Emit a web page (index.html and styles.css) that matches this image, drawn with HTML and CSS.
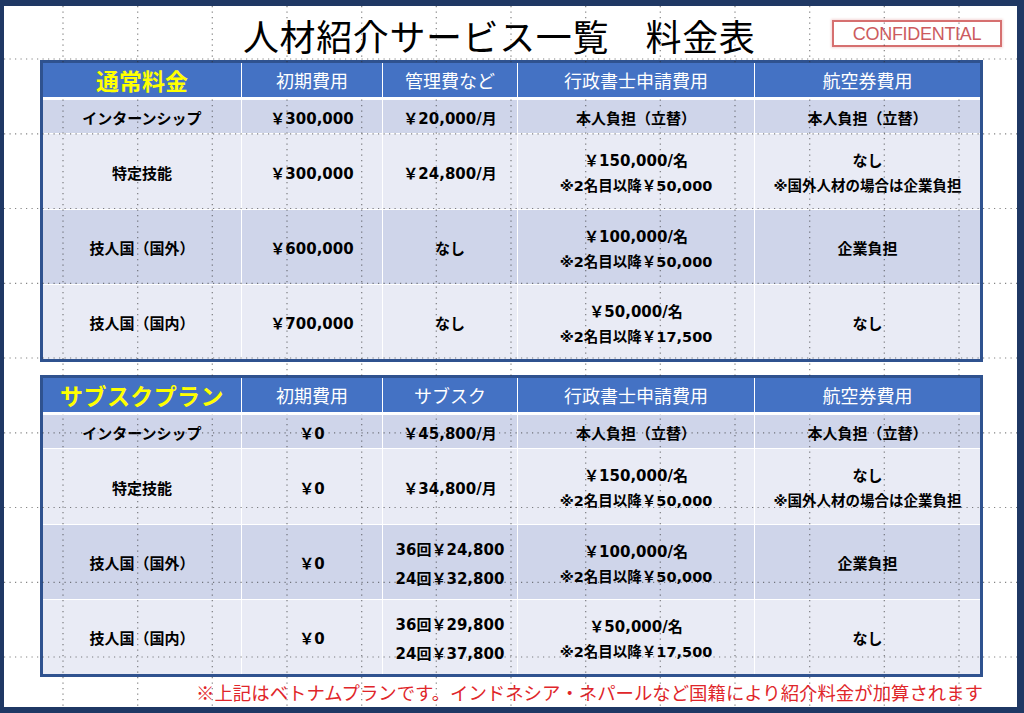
FILE: index.html
```html
<!DOCTYPE html>
<html lang="ja">
<head>
<meta charset="utf-8">
<title>人材紹介サービス一覧 料金表</title>
<link rel="stylesheet" href="styles.css">
</head>
<body>
<div class="page">
  <div class="title-row">
    <h1 class="title">人材紹介サービス一覧　料金表</h1>
    <div class="confidential">CONFIDENTIAL</div>
  </div>

  <div class="tbl">
    <div class="hd hd-main">通常料金</div>
    <div class="hd">初期費用</div>
    <div class="hd">管理費など</div>
    <div class="hd">行政書士申請費用</div>
    <div class="hd">航空券費用</div>

    <div class="c dk">インターンシップ</div>
    <div class="c dk">￥300,000</div>
    <div class="c dk">￥20,000/月</div>
    <div class="c dk">本人負担（立替）</div>
    <div class="c dk">本人負担（立替）</div>

    <div class="c lt">特定技能</div>
    <div class="c lt">￥300,000</div>
    <div class="c lt">￥24,800/月</div>
    <div class="c lt two"><span>￥150,000/名</span><span class="note">※2名目以降￥50,000</span></div>
    <div class="c lt two"><span>なし</span><span class="note">※国外人材の場合は企業負担</span></div>

    <div class="c dk">技人国（国外）</div>
    <div class="c dk">￥600,000</div>
    <div class="c dk">なし</div>
    <div class="c dk two"><span>￥100,000/名</span><span class="note">※2名目以降￥50,000</span></div>
    <div class="c dk">企業負担</div>

    <div class="c lt">技人国（国内）</div>
    <div class="c lt">￥700,000</div>
    <div class="c lt">なし</div>
    <div class="c lt two"><span>￥50,000/名</span><span class="note">※2名目以降￥17,500</span></div>
    <div class="c lt">なし</div>
  </div>

  <div class="tbl tbl-sub">
    <div class="hd hd-main hd-spaced">サブスクプラン</div>
    <div class="hd">初期費用</div>
    <div class="hd">サブスク</div>
    <div class="hd">行政書士申請費用</div>
    <div class="hd">航空券費用</div>

    <div class="c dk">インターンシップ</div>
    <div class="c dk">￥0</div>
    <div class="c dk">￥45,800/月</div>
    <div class="c dk">本人負担（立替）</div>
    <div class="c dk">本人負担（立替）</div>

    <div class="c lt">特定技能</div>
    <div class="c lt">￥0</div>
    <div class="c lt">￥34,800/月</div>
    <div class="c lt two"><span>￥150,000/名</span><span class="note">※2名目以降￥50,000</span></div>
    <div class="c lt two"><span>なし</span><span class="note">※国外人材の場合は企業負担</span></div>

    <div class="c dk">技人国（国外）</div>
    <div class="c dk">￥0</div>
    <div class="c dk two wide"><span>36回￥24,800</span><span>24回￥32,800</span></div>
    <div class="c dk two"><span>￥100,000/名</span><span class="note">※2名目以降￥50,000</span></div>
    <div class="c dk">企業負担</div>

    <div class="c lt">技人国（国内）</div>
    <div class="c lt">￥0</div>
    <div class="c lt two wide"><span>36回￥29,800</span><span>24回￥37,800</span></div>
    <div class="c lt two"><span>￥50,000/名</span><span class="note">※2名目以降￥17,500</span></div>
    <div class="c lt">なし</div>
  </div>

  <p class="footnote">※上記はベトナムプランです。インドネシア・ネパールなど国籍により紹介料金が加算されます</p>

  <svg class="grid" width="1013" height="701" viewBox="0 0 1013 701" aria-hidden="true">
    <g class="gl">
      <line x1="59" y1="0" x2="59" y2="701"/>
      <line x1="133.7" y1="0" x2="133.7" y2="701"/>
      <line x1="208.3" y1="0" x2="208.3" y2="701"/>
      <line x1="283" y1="0" x2="283" y2="701"/>
      <line x1="357.7" y1="0" x2="357.7" y2="701"/>
      <line x1="432.3" y1="0" x2="432.3" y2="701"/>
      <line x1="507" y1="0" x2="507" y2="701"/>
      <line x1="581.7" y1="0" x2="581.7" y2="701"/>
      <line x1="656.3" y1="0" x2="656.3" y2="701"/>
      <line x1="731" y1="0" x2="731" y2="701"/>
      <line x1="805.7" y1="0" x2="805.7" y2="701"/>
      <line x1="880.3" y1="0" x2="880.3" y2="701"/>
      <line x1="955" y1="0" x2="955" y2="701"/>
      <line x1="0" y1="53" x2="1013" y2="53"/>
      <line x1="0" y1="127.8" x2="1013" y2="127.8"/>
      <line x1="0" y1="202.5" x2="1013" y2="202.5"/>
      <line x1="0" y1="277.3" x2="1013" y2="277.3"/>
      <line x1="0" y1="352" x2="1013" y2="352"/>
      <line x1="0" y1="426.8" x2="1013" y2="426.8"/>
      <line x1="0" y1="501.5" x2="1013" y2="501.5"/>
      <line x1="0" y1="576.3" x2="1013" y2="576.3"/>
      <line x1="0" y1="651" x2="1013" y2="651"/>
    </g>
  </svg>
</div>
</body>
</html>
```
FILE: styles.css
```css
html, body {
  margin: 0;
  padding: 0;
}
body {
  background: #1f3864;
  width: 1024px;
  height: 713px;
  overflow: hidden;
  font-family: "Noto Sans CJK JP", sans-serif;
}
.page {
  position: relative;
  margin: 6px 0 0 4px;
  width: 1013px;
  height: 701px;
  background: #ffffff;
  overflow: hidden;
  display: flex;
  flex-direction: column;
}
.title-row {
  height: 54px;
  display: flex;
  align-items: center;
  flex: none;
}
.title {
  margin: 0 0 0 239px;
  font-family: "Noto Sans CJK JP", sans-serif;
  font-weight: 400;
  font-size: 36px;
  letter-spacing: 0.6px;
  line-height: 1;
  color: #000;
  padding-top: 4px;
}
.confidential {
  margin-left: auto;
  margin-right: 15px;
  margin-top: 1px;
  width: 170px;
  height: 27px;
  box-sizing: border-box;
  border: 2px solid #d67070;
  box-shadow: 0 0 2px 1px rgba(230, 160, 160, 0.4);
  display: flex;
  align-items: center;
  justify-content: center;
  color: #cc5b5e;
  font-family: "Liberation Sans", Arial, sans-serif;
  font-size: 18px;
  letter-spacing: -0.3px;
  padding-top: 1px;
}
.tbl {
  flex: none;
  margin-left: 36px;
  width: 943px;
  box-sizing: border-box;
  border: 3px solid #2f528f;
  background: #ffffff;
  display: grid;
  grid-template-columns: 198px 140px 134px 236px 225px;
  grid-template-rows: 36px 33px 75px 74px 74px;
  gap: 1px;
}
.tbl-sub {
  margin-top: 13px;
}
.hd {
  position: relative;
  z-index: 2;
  background: #4472c4;
  border-bottom: 2px solid #ffffff;
  color: #ffffff;
  font-size: 18px;
  font-weight: 400;
  display: flex;
  align-items: center;
  justify-content: center;
  padding-bottom: 1px;
}
.hd-main {
  color: #ffff00;
  font-size: 23px;
  font-weight: 700;
}
.hd-spaced {
  letter-spacing: 0.4px;
}
.c {
  display: flex;
  flex-direction: column;
  align-items: center;
  justify-content: center;
  text-align: center;
  font-family: "DejaVu Sans", "Noto Sans CJK JP", sans-serif;
  font-weight: 700;
  font-size: 15px;
  color: #000;
  line-height: 25px;
  padding-top: 5px;
}
.dk {
  background: #cfd5ea;
}
.lt {
  background: #e9ebf5;
}
.note {
  font-size: 14.5px;
}
.wide {
  line-height: 29px;
}
.footnote {
  flex: none;
  margin: 0;
  height: 30px;
  line-height: 30px;
  text-align: right;
  padding-right: 34px;
  font-family: "Noto Sans CJK JP", sans-serif;
  font-size: 18.4px;
  font-weight: 400;
  color: #e0262a;
  white-space: nowrap;
}
.grid {
  position: absolute;
  left: 0;
  top: 0;
  z-index: 1;
  pointer-events: none;
}
.gl line {
  stroke: #333333;
  stroke-width: 1.2;
  stroke-dasharray: 1.2 4.3;
  opacity: 0.6;
}
```
